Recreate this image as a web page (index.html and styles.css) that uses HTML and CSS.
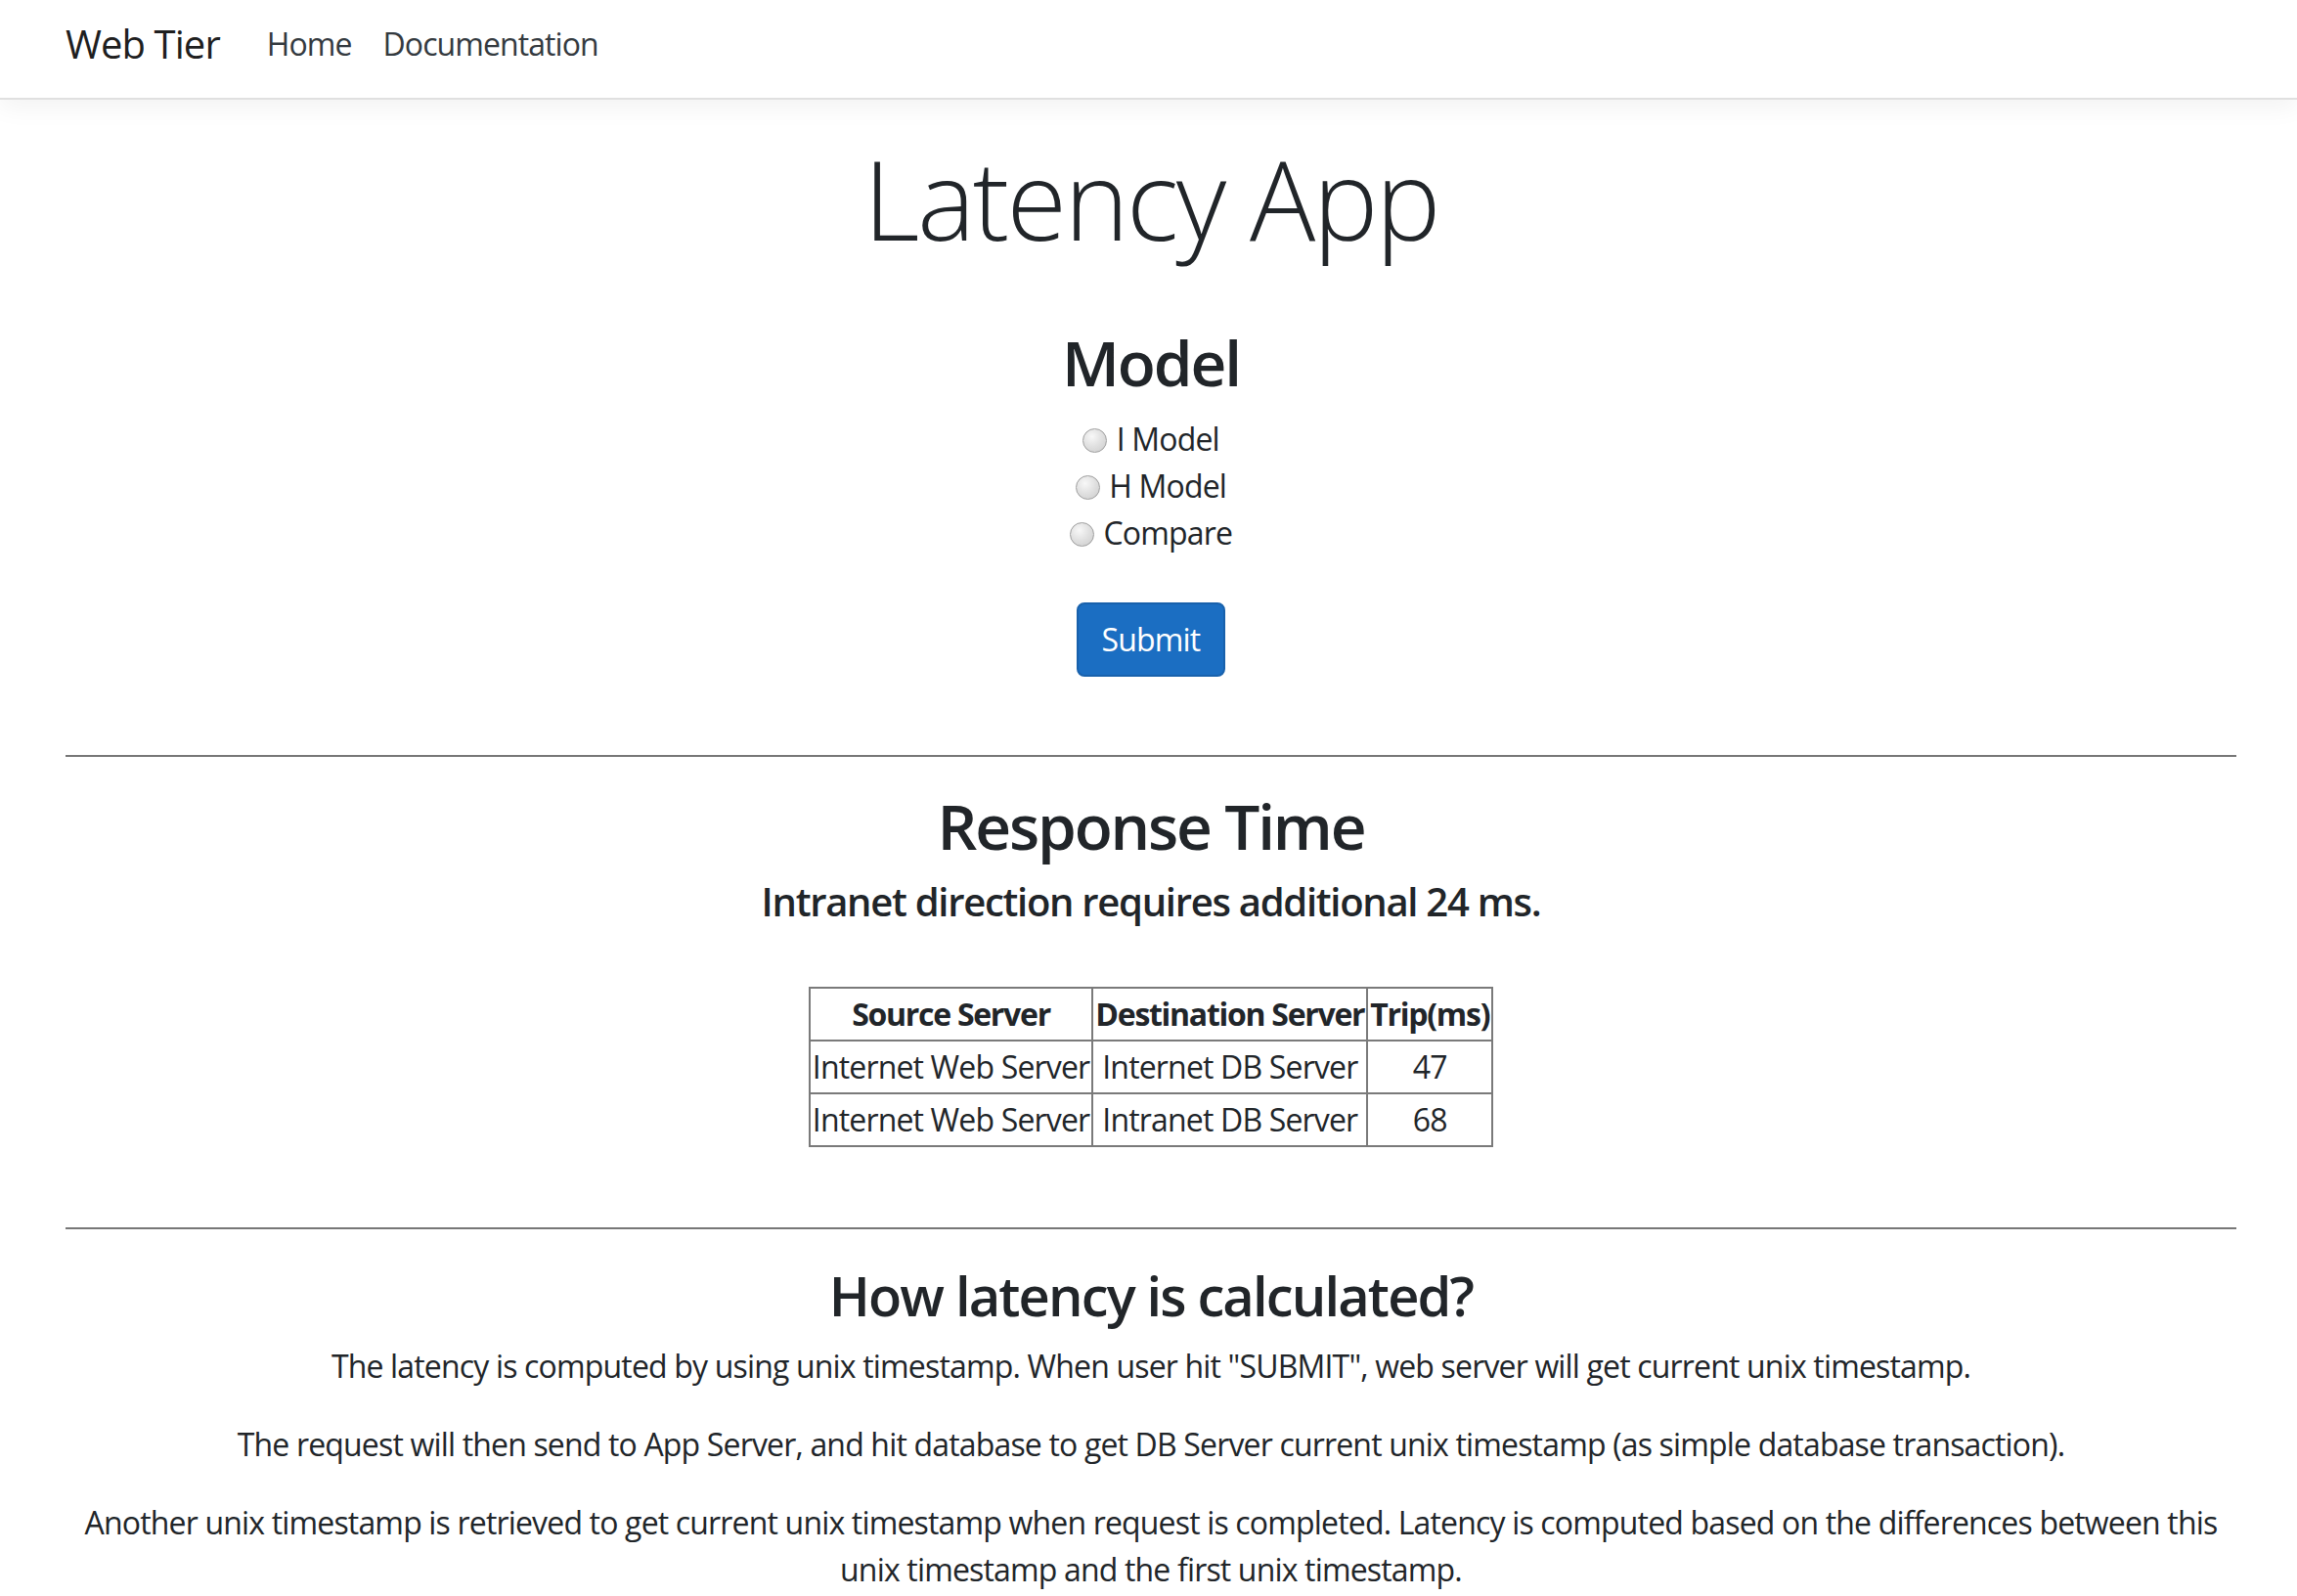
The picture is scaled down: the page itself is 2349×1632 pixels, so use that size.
FILE: index.html
```html
<!DOCTYPE html>
<html lang="en">
<head>
<meta charset="utf-8">
<title>Latency App - Web Tier</title>
<link rel="stylesheet" href="styles.css">
</head>
<body>
<header class="navbar">
  <a class="brand" href="#">Web Tier</a>
  <ul class="nav">
    <li><a class="nav-link" href="#">Home</a></li>
    <li><a class="nav-link" href="#">Documentation</a></li>
  </ul>
</header>
<main class="container">
  <h1 class="display">Latency App</h1>
  <form class="model-form">
    <h2 class="model-title">Model</h2>
    <div class="options">
      <div class="option"><input type="radio" name="model" id="m-i"> <label for="m-i">I Model</label></div>
      <div class="option"><input type="radio" name="model" id="m-h"> <label for="m-h">H Model</label></div>
      <div class="option"><input type="radio" name="model" id="m-c"> <label for="m-c">Compare</label></div>
    </div>
    <button type="button" class="btn-primary">Submit</button>
  </form>
  <hr class="rule rule-first">
  <section class="response">
    <h2 class="response-title">Response Time</h2>
    <h5 class="response-note">Intranet direction requires additional 24 ms.</h5>
    <table class="latency-table">
      <thead>
        <tr><th>Source Server</th><th>Destination Server</th><th>Trip(ms)</th></tr>
      </thead>
      <tbody>
        <tr><td>Internet Web Server</td><td>Internet DB Server</td><td>47</td></tr>
        <tr><td>Internet Web Server</td><td>Intranet DB Server</td><td>68</td></tr>
      </tbody>
    </table>
  </section>
  <hr class="rule rule-second">
  <section class="explain">
    <h3 class="explain-title">How latency is calculated?</h3>
    <p>The latency is computed by using unix timestamp. When user hit "SUBMIT", web server will get current unix timestamp.</p>
    <p>The request will then send to App Server, and hit database to get DB Server current unix timestamp (as simple database transaction).</p>
    <p>Another unix timestamp is retrieved to get current unix timestamp when request is completed. Latency is computed based on the differences between this unix timestamp and the first unix timestamp.</p>
  </section>
</main>
</body>
</html>
```
FILE: styles.css
```css
html, body {
  margin: 0;
  padding: 0;
}
body {
  font-family: "Open Sans", "Noto Sans", sans-serif;
  font-size: 32px;
  line-height: 1.5;
  letter-spacing: -0.026em;
  color: #212529;
  background: #fff;
}

.navbar {
  display: flex;
  align-items: center;
  height: 60px;
  padding: 15px 62px 25px 67px;
  border-bottom: 2px solid #e0e0e0;
  box-shadow: 0 8px 24px rgba(0, 0, 0, 0.05);
}
.brand {
  font-size: 40px;
  line-height: 60px;
  letter-spacing: -0.023em;
  color: rgba(0, 0, 0, 0.9);
  text-decoration: none;
  margin-right: 32px;
}
.nav {
  display: flex;
  list-style: none;
  margin: 0;
  padding: 0;
}
.nav-link {
  display: block;
  padding: 0 16px;
  line-height: 48px;
  letter-spacing: -0.029em;
  color: #343a40;
  text-decoration: none;
}

.container {
  padding: 0 62px 0 67px;
  text-align: center;
}

.display {
  margin: 34px 0 0;
  font-size: 112px;
  font-weight: 300;
  line-height: 1.2;
  letter-spacing: -0.023em;
}

.model-form {
  display: flex;
  flex-direction: column;
  align-items: center;
}
.model-title {
  margin: 63px 0 0;
  font-size: 64px;
  font-weight: 600;
  line-height: 1.2;
  letter-spacing: -0.033em;
}
.options {
  margin-top: 15px;
}
.option {
  line-height: 48px;
}
.option input {
  appearance: none;
  -webkit-appearance: none;
  width: 25px;
  height: 25px;
  margin: 0 2px 0 0;
  border: 1px solid #9e9e9e;
  border-radius: 50%;
  background: radial-gradient(circle at 38% 32%, #f8f8f8 0%, #e2e2e2 45%, #cbcbcb 100%);
  vertical-align: -2px;
  box-sizing: border-box;
}
.btn-primary {
  margin-top: 47px;
  font-family: inherit;
  font-size: 32px;
  line-height: 48px;
  letter-spacing: -0.026em;
  padding: 12px 24px;
  color: #fff;
  background: #1b6ec2;
  border: 2px solid #1861ac;
  border-radius: 8px;
}

.rule {
  border: 0;
  border-top: 2px solid #777;
  height: 0;
  margin: 0;
}
.rule-first {
  margin-top: 80px;
}
.rule-second {
  margin-top: 82px;
}

.response-title {
  margin: 33px 0 0;
  font-size: 64px;
  font-weight: 600;
  line-height: 1.2;
  letter-spacing: -0.034em;
}
.response-note {
  margin: 14px 0 0;
  font-size: 40px;
  font-weight: 600;
  line-height: 48px;
  letter-spacing: -0.032em;
}
.latency-table {
  margin: 63px auto 0;
  border-collapse: collapse;
  border: 2px solid #6c6c6c;
}
.latency-table th,
.latency-table td {
  border: 2px solid #7a7a7a;
  padding: 2px;
  line-height: 48px;
}
.latency-table th {
  font-weight: 700;
  letter-spacing: -0.04em;
}

.explain-title {
  margin: 34px 0 0;
  font-size: 56px;
  font-weight: 600;
  line-height: 1.2;
  letter-spacing: -0.033em;
}
.explain p {
  margin: 32px 0 0;
}
.explain p:first-of-type {
  margin-top: 15px;
}
```
